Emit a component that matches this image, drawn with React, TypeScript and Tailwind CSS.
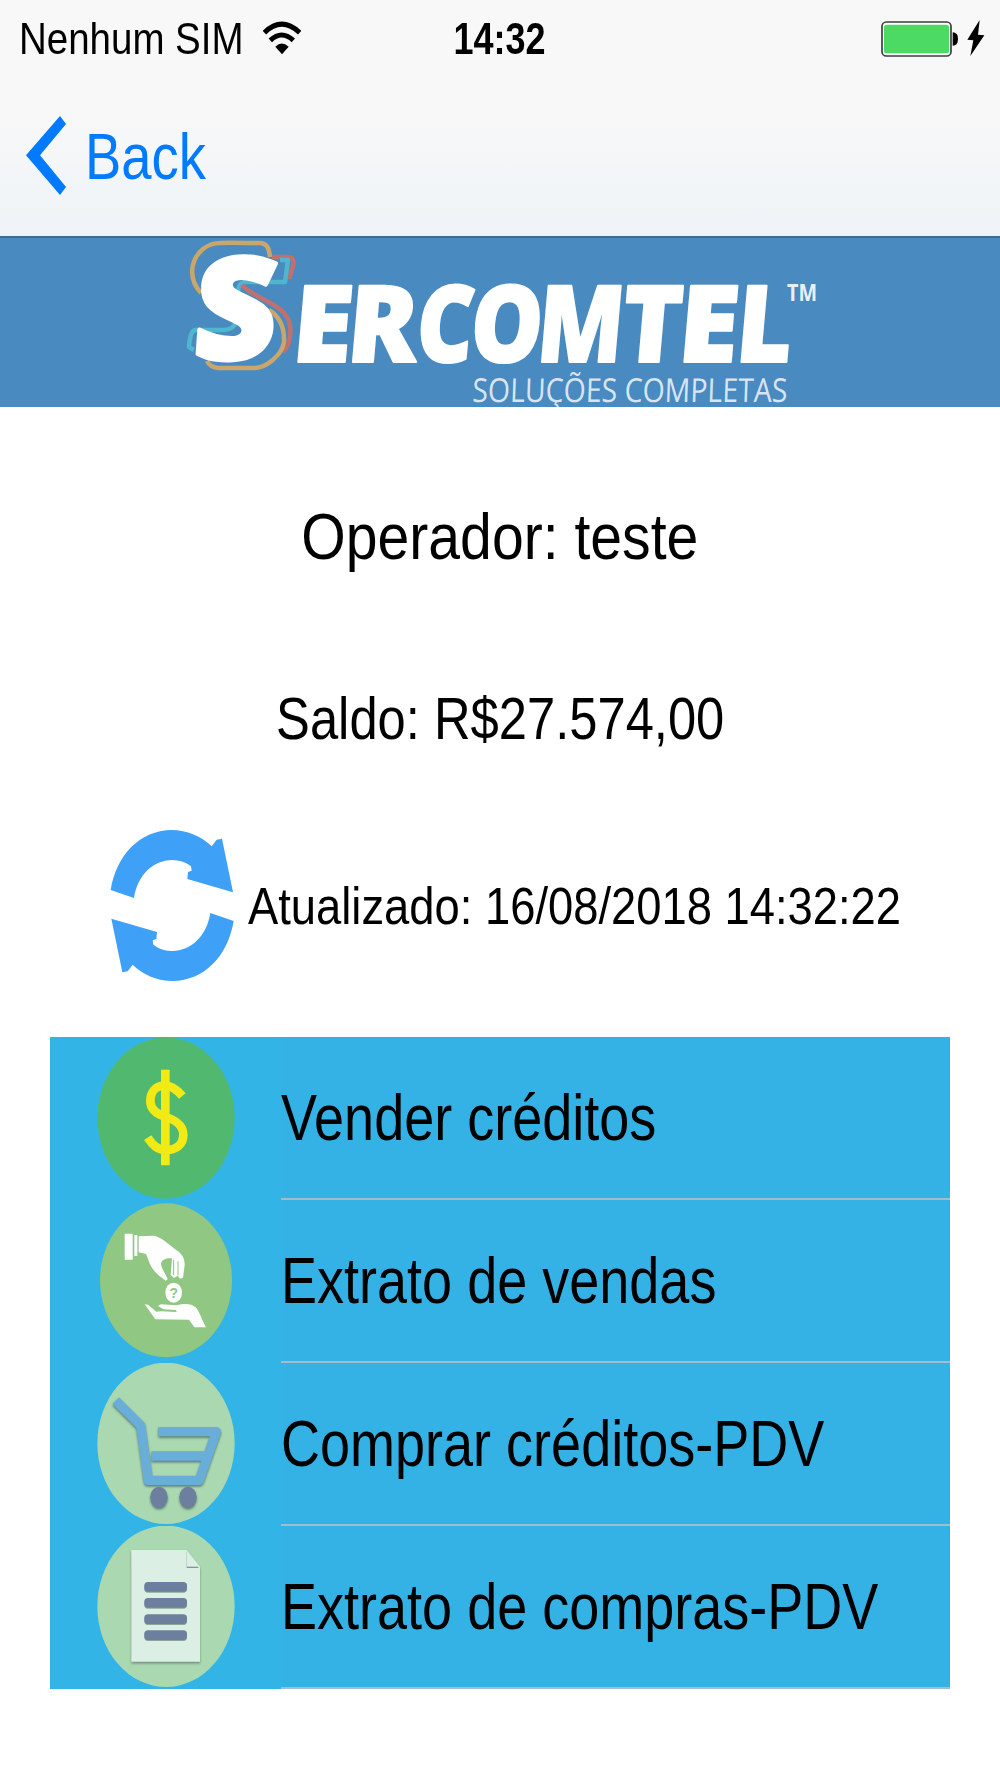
import React from 'react';
import clsx from 'clsx';

// Text is drawn narrower than the font's natural width
const Label = ({ className, children }) => (
  <span className={clsx("block whitespace-nowrap leading-none", className)}>{children}</span>
);

const StatusBar = () => (
  <div className="grid h-[76px] grid-cols-[1fr_auto_1fr] items-center">
    <div className="flex items-center pl-[19px]">
      <div className="w-[244px]">
        <Label className="origin-left scale-x-[0.855] text-[45px]">Nenhum SIM</Label>
      </div>
      <svg className="h-[34px] w-[38px]" viewBox="790 60 114 102">
        <path d="M794 95Q846 44 900 95" fill="none" stroke="#000" strokeWidth="15" />
        <path d="M812 118Q846 86 881 118" fill="none" stroke="#000" strokeWidth="15" />
        <path d="M827 137Q846 118 867 137L847 160Z" />
      </svg>
    </div>
    <div className="flex w-[90px] justify-center">
      <Label className="scale-x-[0.8] text-[45px] font-bold">14:32</Label>
    </div>
    <div className="flex justify-end pr-[14px]">
      <svg className="h-[38px] w-[106px]" viewBox="1140 54 318 114">
        <rect x="1146" y="63" width="207" height="102" rx="13" fill="#fff" stroke="#3c3c3c" strokeWidth="5" />
        <rect x="1152" y="71" width="195" height="86" rx="8" fill="#4cd964" />
        <path d="M1358 94Q1374 94 1374 114Q1374 134 1358 134Z" />
        <path d="M1439 57L1402 116L1420 118L1411 165L1453 103L1434 101Z" />
      </svg>
    </div>
  </div>
);

const NavBar = () => (
  <div className="flex h-[159px] items-center pl-[26px]">
    <svg className="h-[79px] w-10" viewBox="78 348 120 237">
      <path d="M78 466L180 348L198 372L120 466L198 561L180 585Z" fill="#007aff" />
    </svg>
    <Label className="ml-[19px] mt-0.5 origin-left scale-x-[0.85] text-[64px] text-[#007aff]">Back</Label>
  </div>
);

const wordmark = [
  { char: "E", x: 290, width: 60 },
  { char: "R", x: 345, width: 70 },
  { char: "C", x: 414, width: 57 },
  { char: "O", x: 468, width: 72 },
  { char: "M", x: 535, width: 86 },
  { char: "T", x: 619, width: 60 },
  { char: "E", x: 676, width: 60 },
  { char: "L", x: 734, width: 56 },
];

const Logo = () => (
  <svg className="h-[169px] w-[660px] overflow-visible" viewBox="170 238 660 169">
    <g fill="none" strokeWidth="4.5" strokeLinejoin="round">
      <path d="M201 293C188 279 190 260 203 249C213 241 222 243 245 243H260Q269 243 270 257" stroke="#c9a66b" />
      <path d="M272 257H289Q295 258 293 266L289 279" stroke="#c0716f" />
      <path d="M280 260H288L285 282H245Q238 283 238 292" stroke="#4fb6cf" />
      <path d="M242 285C255 300 286 303 290 325Q292 343 283 352" stroke="#c0716f" />
      <path d="M269 310Q285 320 284 342C282 355 266 369 252 368H218Q210 367 207 361" stroke="#c9a66b" />
      <path d="M236 322Q233 330 223 330H195Q190 331 189 347L194 350" stroke="#4fb6cf" />
    </g>
    <g fill="#fff" fontFamily="'Open Sans', sans-serif">
      <g fontWeight="800" stroke="#fff" strokeLinejoin="round">
        <text transform="translate(191 359) skewX(-4)" fontSize="142" strokeWidth="4" textLength="83" lengthAdjust="spacingAndGlyphs">S</text>
        <text transform="translate(0 362) skewX(-5)" fontSize="107" strokeWidth="2">
          {wordmark.map((letter) => (
            <tspan key={letter.x} x={letter.x} textLength={letter.width} lengthAdjust="spacingAndGlyphs">
              {letter.char}
            </tspan>
          ))}
        </text>
      </g>
      <text transform="translate(472 402) skewX(-2)" fontSize="33" fillOpacity="0.8" textLength="315" lengthAdjust="spacingAndGlyphs">SOLUÇÕES COMPLETAS</text>
      <text x="787" y="301" fontSize="24" fontWeight="700" fillOpacity="0.9" textLength="30" lengthAdjust="spacingAndGlyphs">TM</text>
    </g>
  </svg>
);

const refreshArrow =
  "M62 241C80 135 150 62 245 61C290 61 335 80 365 110L380 90L396 87L429 248L292 208L294 187L305 183L303 170C287 157 268 151 246 151C190 152 143 195 132 265Z";

const RefreshIcon = () => (
  <svg className="h-[155px] w-[125px] shrink-0" viewBox="60 55 375 465" fill="#3fa0f8">
    <path d={refreshArrow} />
    <path d={refreshArrow} transform="rotate(180 246.5 287.5)" />
  </svg>
);

const SellIcon = () => (
  <svg className="h-[163px] w-[138px]" viewBox="171 51 414 489">
    <ellipse cx="378" cy="294" rx="206" ry="242" fill="#51b96f" />
    <g fill="none" stroke="#f2ea14" strokeWidth="26">
      <path d="M376 149V436" />
      <path d="M427 228C410 208 395 197 374 197C345 197 331 218 331 243C331 267 346 281 377 291C411 302 430 317 430 345C430 373 409 390 379 390C352 390 337 374 323 353" />
    </g>
  </svg>
);

const SalesIcon = () => (
  <svg className="h-[163px] w-[138px]" viewBox="171 15 414 489">
    <ellipse cx="378" cy="256" rx="198" ry="231" fill="#8fc783" />
    <g fill="#fff">
      <path d="M254 116H278V194H254ZM283 120H292V183H283Z" />
      <path d="M296 124L340 122C362 124 385 147 410 166C428 179 434 190 434 210L429 248L420 251L413 242L402 249L392 240L396 190C380 188 364 194 363 207C364 222 377 235 383 253L377 257C362 246 340 232 329 205L318 177L296 172Z" />
      <ellipse cx="401" cy="293" rx="25" ry="30" />
      <path d="M314 328L324 329L349 350L363 349L410 351L408 345L371 343L354 333L362 328L410 331C432 324 455 325 467 337C480 352 486 376 498 397H463L447 374L346 373Z" />
    </g>
    <path d="M401 194V240M414 199V242" stroke="#8fc783" strokeWidth="3" />
    <text x="401" y="309" fontSize="42" fontWeight="700" textAnchor="middle" fill="#8fc783">?</text>
  </svg>
);

const CartIcon = () => (
  <svg className="h-[163px] w-[138px]" viewBox="171 24 414 489">
    <ellipse cx="378" cy="265" rx="206" ry="242" fill="#a9d8b1" />
    <g className="drop-shadow-[0_5px_3px_rgba(60,90,80,0.7)]">
      <path d="M227 137L302 211L325 376H478L529 230H355M334 303H502" fill="none" stroke="#69add9" strokeWidth="28" strokeLinejoin="round" />
      <ellipse cx="357" cy="427" rx="26" ry="32" fill="#6c7f9f" />
      <ellipse cx="444" cy="427" rx="26" ry="32" fill="#6c7f9f" />
    </g>
  </svg>
);

const ReportIcon = () => (
  <svg className="h-[163px] w-[138px]" viewBox="171 33 414 489">
    <ellipse cx="378" cy="274" rx="206" ry="242" fill="#a9d8b1" />
    <path className="drop-shadow-[0_5px_3px_rgba(60,90,80,0.55)]" d="M274 105H440L480 155V440H274Z" fill="#dcefe4" />
    <path className="drop-shadow-[0_3px_2px_rgba(60,70,70,0.7)]" d="M440 107L476 155H440Z" fill="#dcefe4" />
    <g className="drop-shadow-[0_3px_2px_rgba(60,90,80,0.5)]" fill="#6c7f9f">
      <rect x="313" y="201" width="128" height="29" rx="11" />
      <rect x="313" y="249" width="128" height="29" rx="11" />
      <rect x="313" y="298" width="128" height="29" rx="11" />
      <rect x="313" y="346" width="128" height="29" rx="11" />
    </g>
  </svg>
);

const MenuItem = ({ label, icon }) => (
  <li className="flex h-[163px]">
    <div className="w-[231px] bg-[#33b4e7] pl-[47px]">{icon}</div>
    <div className="flex flex-1 items-center border-b-2 border-[#a3bccc] bg-[#35b2e5]">
      <Label className="mt-px w-0 origin-left scale-x-[0.844] text-[64px]">{label}</Label>
    </div>
  </li>
);

const App = () => {
  return (
    <div className="h-[1778px] w-[1000px] overflow-hidden bg-white font-['Liberation_Sans',Arial,sans-serif] text-black">
      <header className="h-[238px] border-b-2 border-[#3c6c96] bg-linear-to-b from-[#f8f8f8] from-45% to-[#eef3f7]">
        <StatusBar />
        <NavBar />
      </header>

      <div className="h-[169px] bg-[#498ac1] pl-[170px]">
        <Logo />
      </div>

      <main>
        <div className="flex h-[257px] items-center justify-center">
          <Label className="mt-0.5 scale-x-[0.879] text-[65px]">Operador: teste</Label>
        </div>
        <div className="flex h-[109px] items-center justify-center">
          <Label className="mt-px scale-x-[0.845] text-[60px]">Saldo: R$27.574,00</Label>
        </div>
        <div className="flex h-[264px] items-center pl-[110px]">
          <RefreshIcon />
          <Label className="ml-[13px] mt-0.5 origin-left scale-x-[0.872] text-[52px]">
            Atualizado: 16/08/2018 14:32:22
          </Label>
        </div>

        <ul className="mx-[50px]">
          <MenuItem label="Vender créditos" icon={<SellIcon />} />
          <MenuItem label="Extrato de vendas" icon={<SalesIcon />} />
          <MenuItem label="Comprar créditos-PDV" icon={<CartIcon />} />
          <MenuItem label="Extrato de compras-PDV" icon={<ReportIcon />} />
        </ul>
      </main>
    </div>
  );
};

export default App;
